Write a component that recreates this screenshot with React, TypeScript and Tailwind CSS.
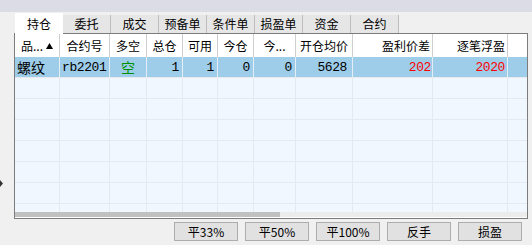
import React from "react";

const cjk = '"Noto Sans CJK SC", "Noto Sans", sans-serif';
const mono = '"Liberation Mono", "DejaVu Sans Mono", monospace';

const cols = [45, 50, 37, 36, 35, 36, 42, 57, 80, 75];

type HCell = { t: string; align: "left" | "center" | "right"; sort?: boolean };
const headers: HCell[] = [
  { t: "品...", align: "left", sort: true },
  { t: "合约号", align: "center" },
  { t: "多空", align: "center" },
  { t: "总仓", align: "center" },
  { t: "可用", align: "center" },
  { t: "今仓", align: "center" },
  { t: "今...", align: "center" },
  { t: "开仓均价", align: "center" },
  { t: "盈利价差", align: "right" },
  { t: "逐笔浮盈", align: "right" },
];

const tabs = ["持仓", "委托", "成交", "预备单", "条件单", "损盈单", "资金", "合约"];
const buttons = ["平33%", "平50%", "平100%", "反手", "损盈"];

function EmptyRow() {
  return (
    <div className="flex h-[21px] shrink-0 border-b border-[#e6e9ee]">
      {cols.map((w, i) => (
        <div key={i} style={{ width: w }} className="shrink-0 border-r border-[#e6e9ee]" />
      ))}
      <div className="flex-1" />
    </div>
  );
}

export default function App() {
  return (
    <div
      className="relative w-[532px] h-[245px] bg-[#f0f0f0] overflow-hidden text-black"
      style={{ fontFamily: cjk }}
    >
      <div className="h-[12px] bg-[#dcdce6]" />
      {/* tabs */}
      <div className="flex items-start h-[21px] pl-[15px]">
        {tabs.map((t, i) =>
          i === 0 ? (
            <div
              key={t}
              className="w-[48px] h-[21px] mt-[1px] bg-white flex items-center justify-center text-[12px] leading-none"
            >
              {t}
            </div>
          ) : (
            <div
              key={t}
              className="w-[48px] h-[18px] mt-[3px] bg-[#e6e6e6] border-r border-[#bdbdbd] flex items-center justify-center text-[12px] leading-none"
            >
              {t}
            </div>
          )
        )}
      </div>
      {/* table */}
      <div className="ml-[14px] w-[514px] h-[186px] border border-[#7c7c7c] bg-[#f0f7ff] flex flex-col overflow-hidden">
        <div className="flex h-[23px] shrink-0 bg-white">
          {headers.map((h, i) => (
            <div
              key={i}
              style={{ width: cols[i] }}
              className={`shrink-0 border-r border-[#cfcfcf] flex items-center text-[12px] leading-none ${
                h.align === "left"
                  ? "justify-start pl-[6px]"
                  : h.align === "right"
                  ? "justify-end pr-[2px]"
                  : "justify-center"
              }`}
            >
              <span>{h.t}</span>
              {h.sort && (
                <svg width="7" height="6" viewBox="0 0 7 6" className="ml-[3px]">
                  <polygon points="3.5,0 7,6 0,6" fill="#000" />
                </svg>
              )}
            </div>
          ))}
          <div className="flex-1" />
        </div>
        <div className="flex-1 overflow-hidden flex flex-col">
          <div className="flex h-[21px] shrink-0 bg-[#9ecde9] border-b border-[#e6e9ee] text-[14px] leading-none">
            <div style={{ width: cols[0] }} className="shrink-0 border-r border-[#e6eef5] flex items-center pl-[2px]">
              螺纹
            </div>
            <div
              style={{ width: cols[1], fontFamily: mono }}
              className="shrink-0 border-r border-[#e6eef5] flex items-center pl-[2px] text-[13px] tracking-[-0.4px]"
            >
              rb2201
            </div>
            <div style={{ width: cols[2] }} className="shrink-0 border-r border-[#e6eef5] flex items-center justify-center text-[#009000]">
              空
            </div>
            {[
              { v: "1", pr: "pr-[3px]" },
              { v: "1", pr: "pr-[3px]" },
              { v: "0", pr: "pr-[3px]" },
              { v: "0", pr: "pr-[3px]" },
              { v: "5628", pr: "pr-[5px]" },
            ].map((c, i) => (
              <div
                key={i}
                style={{ width: cols[3 + i], fontFamily: mono }}
                className={`shrink-0 border-r border-[#e6eef5] flex items-center justify-end text-[13px] tracking-[-0.4px] ${c.pr}`}
              >
                {c.v}
              </div>
            ))}
            <div
              style={{ width: cols[8], fontFamily: mono }}
              className="shrink-0 border-r border-[#e6eef5] flex items-center justify-end pr-[1px] text-[13px] tracking-[-0.4px] text-[#ff0000]"
            >
              202
            </div>
            <div
              style={{ width: cols[9], fontFamily: mono }}
              className="shrink-0 border-r border-[#e6eef5] flex items-center justify-end pr-[2px] text-[13px] tracking-[-0.4px] text-[#ff0000]"
            >
              2020
            </div>
            <div className="flex-1" />
          </div>
          {Array.from({ length: 7 }).map((_, i) => (
            <EmptyRow key={i} />
          ))}
        </div>
        <div className="flex h-[5px] shrink-0">
          <div className="w-[265px] bg-[#c1c1c1]" />
          <div className="flex-1 bg-[#ececec]" />
        </div>
        <div className="h-[1px] shrink-0 bg-white" />
      </div>
      {/* buttons */}
      <div className="flex justify-end gap-[7px] pr-[10px] mt-[3px]">
        {buttons.map((b) => (
          <button
            key={b}
            className="w-[64px] h-[19px] bg-[#e1e1e1] border border-[#adadad] flex items-center justify-center text-[12px] leading-none"
            style={{ fontFamily: cjk }}
          >
            {b}
          </button>
        ))}
      </div>
      {/* left edge marker */}
      <svg width="4" height="7" viewBox="0 0 4 7" className="absolute left-0 top-[180px]">
        <polygon points="0,0 3,3.5 0,7" fill="#333" />
      </svg>
    </div>
  );
}
